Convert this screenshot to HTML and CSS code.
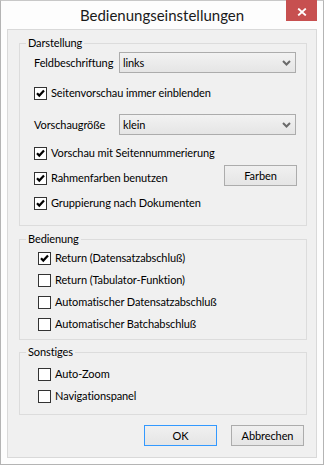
FILE: index.html
```html
<!DOCTYPE html>
<html lang="de">
<head>
<meta charset="utf-8">
<title>Bedienungseinstellungen</title>
<link rel="stylesheet" href="styles.css">
</head>
<body>
<div class="window">
  <div class="titlebar">
    <span class="title-spacer"></span>
    <h1 class="title">Bedienungseinstellungen</h1>
    <div class="close-btn">
      <svg class="close-icon" width="10" height="8" viewBox="0 0 10 8"><path d="M1.2 0.6 L8.8 7.4 M8.8 0.6 L1.2 7.4" stroke="#fff" stroke-width="1.9" fill="none"/></svg>
    </div>
  </div>
  <div class="client">
    <fieldset class="group group-display">
      <legend class="group-title">Darstellung</legend>
      <div class="group-body">
        <div class="combo-row r1">
          <span class="field-label">Feldbeschriftung</span>
          <div class="combo"><span class="combo-value">links</span><svg class="chev" width="9" height="6" viewBox="0 0 9 6"><path d="M1 1 L4.5 4.5 L8 1" stroke="#6a6a6a" stroke-width="2" fill="none"/></svg></div>
        </div>
        <div class="check r2"><span class="box on"><svg width="11" height="11" viewBox="0 0 11 11"><path d="M2 5.2 L4.3 7.6 L9 2.6" stroke="#000" stroke-width="2.2" fill="none"/></svg></span><span class="check-text">Seitenvorschau immer einblenden</span></div>
        <div class="combo-row r3">
          <span class="field-label">Vorschaugröße</span>
          <div class="combo"><span class="combo-value">klein</span><svg class="chev" width="9" height="6" viewBox="0 0 9 6"><path d="M1 1 L4.5 4.5 L8 1" stroke="#6a6a6a" stroke-width="2" fill="none"/></svg></div>
        </div>
        <div class="check r4"><span class="box on"><svg width="11" height="11" viewBox="0 0 11 11"><path d="M2 5.2 L4.3 7.6 L9 2.6" stroke="#000" stroke-width="2.2" fill="none"/></svg></span><span class="check-text">Vorschau mit Seitennummerierung</span></div>
        <div class="button-row r5">
          <div class="check"><span class="box on"><svg width="11" height="11" viewBox="0 0 11 11"><path d="M2 5.2 L4.3 7.6 L9 2.6" stroke="#000" stroke-width="2.2" fill="none"/></svg></span><span class="check-text">Rahmenfarben benutzen</span></div>
          <button class="btn btn-colors">Farben</button>
        </div>
        <div class="check r6"><span class="box on"><svg width="11" height="11" viewBox="0 0 11 11"><path d="M2 5.2 L4.3 7.6 L9 2.6" stroke="#000" stroke-width="2.2" fill="none"/></svg></span><span class="check-text">Gruppierung nach Dokumenten</span></div>
      </div>
    </fieldset>

    <fieldset class="group group-input">
      <legend class="group-title">Bedienung</legend>
      <div class="group-body">
        <div class="check"><span class="box on"><svg width="11" height="11" viewBox="0 0 11 11"><path d="M2 5.2 L4.3 7.6 L9 2.6" stroke="#000" stroke-width="2.2" fill="none"/></svg></span><span class="check-text">Return (Datensatzabschluß)</span></div>
        <div class="check"><span class="box"></span><span class="check-text">Return (Tabulator-Funktion)</span></div>
        <div class="check"><span class="box"></span><span class="check-text">Automatischer Datensatzabschluß</span></div>
        <div class="check"><span class="box"></span><span class="check-text">Automatischer Batchabschluß</span></div>
      </div>
    </fieldset>

    <fieldset class="group group-misc">
      <legend class="group-title">Sonstiges</legend>
      <div class="group-body">
        <div class="check"><span class="box"></span><span class="check-text">Auto-Zoom</span></div>
        <div class="check"><span class="box"></span><span class="check-text">Navigationspanel</span></div>
      </div>
    </fieldset>

    <div class="actions">
      <button class="btn btn-default">OK</button>
      <button class="btn">Abbrechen</button>
    </div>
  </div>
</div>
</body>
</html>
```

FILE: styles.css
```css
* { box-sizing: border-box; }

html, body {
  margin: 0;
  padding: 0;
  background: #ffffff;
}

body {
  font-family: "Lato", "Liberation Sans", sans-serif;
  font-size: 11px;
  letter-spacing: -0.1px;
  color: #000;
}

.window {
  width: 324px;
  height: 465px;
  border: 1px solid #b4b4b4;
  border-top-color: #c8c8c8;
  background: #fdfdfd;
  display: flex;
  flex-direction: column;
}

.titlebar {
  height: 28px;
  flex: none;
  display: grid;
  grid-template-columns: 1fr auto 1fr;
  align-items: start;
}

.title {
  margin: 0;
  font-weight: normal;
  font-size: 15px;
  letter-spacing: 0;
  line-height: 28px;
  color: #1a1a1a;
  white-space: nowrap;
}

.close-btn {
  justify-self: end;
  width: 31px;
  height: 21px;
  margin-top: -1px;
  margin-right: 6px;
  background: #c75050;
  display: flex;
  align-items: center;
  justify-content: center;
}

.close-icon {
  display: block;
  margin-top: 2px;
}

.client {
  flex: 1;
  margin: 0 6px 6px 6px;
  border: 1px solid #d9d9d9;
  background: #f0f0f0;
  display: flex;
  flex-direction: column;
}

.group {
  margin: 0 9px 0 11px;
  padding: 0;
  border: 1px solid #dcdcdc;
  min-width: 0;
}

.group-title {
  margin-left: 6px;
  padding: 0 2px;
  line-height: 14px;
  font-size: 11px;
}

.group-display .group-body {
  padding: 2px 9px 15px 14px;
}

.group-display { margin-top: 6px; }

.group-input { margin-top: 6px; }

.group-input .group-body {
  padding: 6px 10px 8px 18px;
}

.group-misc { margin-top: 5px; }

.group-misc .group-body {
  padding: 9px 10px 11px 18px;
}

.group-input .check + .check,
.group-misc .check + .check { margin-top: 9px; }

.combo-row {
  display: flex;
  align-items: center;
  height: 21px;
}

.field-label {
  width: 85px;
  flex: none;
  white-space: nowrap;
}

.combo {
  width: 177px;
  height: 21px;
  border: 1px solid #acacac;
  background: linear-gradient(#f2f2f2, #e5e5e5);
  display: flex;
  align-items: center;
  justify-content: space-between;
  padding: 0 3px 0 3px;
}

.chev { display: block; margin-right: 1px; }

.check {
  display: flex;
  align-items: center;
  gap: 4px;
  height: 13px;
  line-height: 13px;
  white-space: nowrap;
}

.check-text {
  position: relative;
  top: -1px;
}

.box {
  width: 13px;
  height: 13px;
  flex: none;
  border: 1px solid #333333;
  background: #ffffff;
  display: flex;
  align-items: center;
  justify-content: center;
}

.box svg { display: block; }

.r2 { margin-top: 14px; }
.r3 { margin-top: 14px; }
.r4 { margin-top: 12px; }
.r5 { margin-top: 5px; }
.r6 { margin-top: 11px; }

.button-row {
  display: flex;
  align-items: flex-end;
  justify-content: space-between;
  height: 21px;
}

.button-row .check { margin-bottom: 1px; }

.btn {
  width: 73px;
  height: 21px;
  border: 1px solid #acacac;
  background: linear-gradient(#f0f0f0, #e5e5e5);
  font-family: inherit;
  font-size: 11px;
  letter-spacing: -0.1px;
  color: #000;
  padding: 0;
  line-height: 19px;
}

.actions {
  margin-top: 10px;
  margin-right: 12px;
  display: flex;
  justify-content: flex-end;
  gap: 14px;
}

.btn-default {
  border-color: #3399ff;
}
```
